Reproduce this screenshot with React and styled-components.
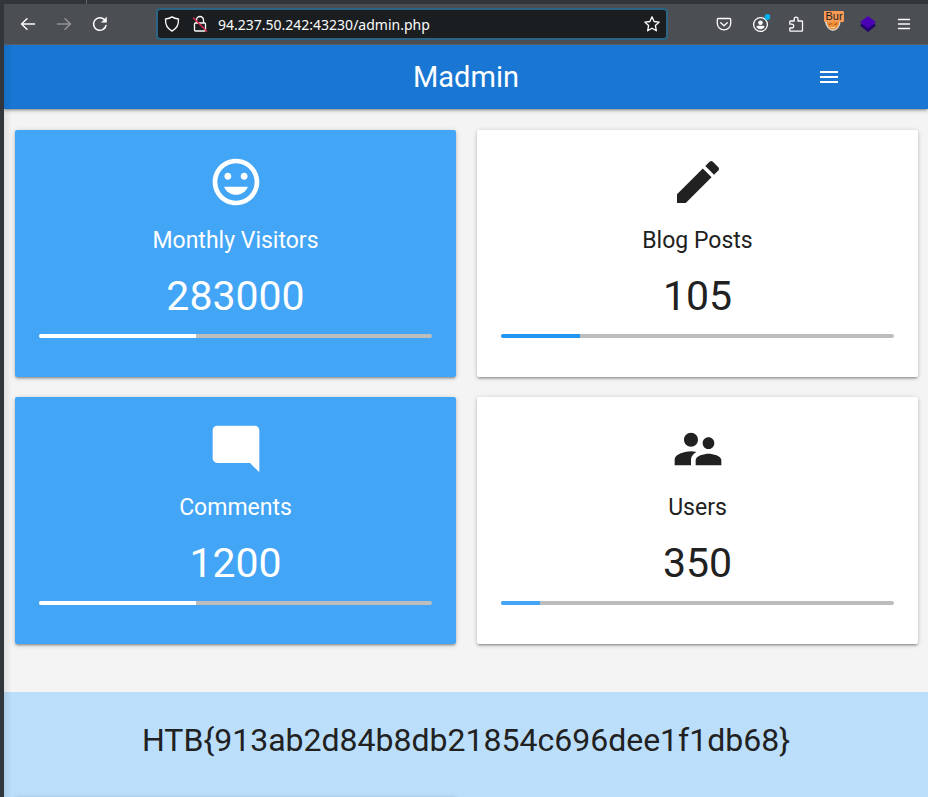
import React from "react";
import styled, { createGlobalStyle } from "styled-components";

const GlobalStyle = createGlobalStyle`
  *, *::before, *::after { box-sizing: border-box; }
  body { margin: 0; background: #31363b; font-family: Roboto, sans-serif; }
  h1, h2, p { margin: 0; font-weight: 400; }
  button { border: 0; padding: 0; background: none; color: inherit; font: inherit; cursor: pointer; }
`;

const elevation =
  "0 2px 2px 0 rgba(0,0,0,.14), 0 3px 1px -2px rgba(0,0,0,.12), 0 1px 5px 0 rgba(0,0,0,.2)";

const Window = styled.div`
  display: flex;
  flex-direction: column;
  height: 100vh;
  padding-left: 4px;
  overflow: hidden;
`;

const TabStrip = styled.div`
  flex: none;
  width: 83px;
  height: 4px;
  border-right: 1px solid #63676b;
`;

const Toolbar = styled.header`
  flex: none;
  display: flex;
  align-items: center;
  height: 41px;
  padding: 0 6px;
  background: #4b4e53;
  border-bottom: 1px solid #5b5e62;
  color: #fcfcfc;
`;

const ToolButton = styled.button`
  position: relative;
  display: flex;
  align-items: center;
  justify-content: center;
  width: 36px;
  height: 32px;

  &:disabled { color: #919397; cursor: default; }
`;

const AddressBar = styled.div`
  flex: 1;
  display: flex;
  align-items: center;
  gap: 10px;
  height: 32px;
  margin: 0 38px;
  padding: 0 6px;
  background: #1b1e20;
  border: 2px solid #2b6484;
  border-radius: 4px;
`;

const AddressInput = styled.input`
  flex: 1;
  min-width: 0;
  border: 0;
  padding: 0;
  outline: 0;
  background: none;
  color: #fcfcfc;
  font: 14px "Noto Sans", sans-serif;
`;

const BurBadge = styled.span`
  position: absolute;
  top: 3px;
  left: 10px;
  width: 20px;
  height: 11px;
  border-radius: 1px;
  background: #f99a56;
  color: #1b1e20;
  font: 11px/11px "Liberation Sans", sans-serif;
  text-align: center;
`;

const Page = styled.main`
  position: relative;
  flex: 1;
  min-height: 0;
  overflow: hidden;
  background: #f4f4f4;

  &::after {
    content: "";
    position: absolute;
    top: 0;
    bottom: 0;
    left: 0;
    width: 8px;
    background: linear-gradient(to right, rgba(0, 0, 0, 0.08), transparent);
    pointer-events: none;
  }
`;

const NavBar = styled.nav`
  height: 64px;
  background: #1976d2;
  box-shadow: ${elevation};
  color: #fff;
`;

const NavContainer = styled.div`
  display: grid;
  grid-template-columns: 1fr auto 1fr;
  align-items: center;
  width: 85%;
  height: 100%;
  margin: 0 auto;
`;

const Brand = styled.h1`
  grid-column: 2;
  font-size: 29px;
  line-height: 64px;
`;

const MenuButton = styled.button`
  justify-self: end;
  display: flex;
  padding: 0 18px;
`;

const CardGrid = styled.section`
  display: grid;
  grid-template-columns: 1fr 1fr;
  gap: 20px 21px;
  padding: 21px 10px 48px 11px;
`;

const Card = styled.article`
  display: flex;
  flex-direction: column;
  align-items: center;
  padding: 24px 24px 39px;
  border-radius: 2px;
  background: ${(p) => (p.$filled ? "#42a5f5" : "#fff")};
  color: ${(p) => (p.$filled ? "#fff" : "#212121")};
  box-shadow: ${elevation};
`;

const CardTitle = styled.h2`
  margin-top: 18px;
  font-size: 23px;
  line-height: 25px;
`;

const CardValue = styled.p`
  margin: 21px 0 15px;
  font-size: 41px;
  line-height: 45px;
`;

const Track = styled.div`
  width: 100%;
  height: 4px;
  overflow: hidden;
  border-radius: 2px;
  background: #bdbdbd;
`;

const Fill = styled.div`
  height: 100%;
  background: ${(p) => p.$color};
`;

const FlagBand = styled.section`
  background: #bbdefb;
  color: #212121;
  text-align: center;
`;

const FlagText = styled.p`
  padding: 30px 0;
  font-size: 32px;
  line-height: 36px;
`;

const PanelRow = styled.div`
  display: grid;
  grid-template-columns: 1fr 1fr;
  gap: 21px;
  padding: 9px 10px 0 11px;
`;

const Panel = styled(Card)`
  min-height: 120px;
`;

function Line({ size = 16, children, ...rest }) {
  return (
    <svg width={size} height={size} viewBox="0 0 16 16" fill="none" stroke="currentColor"
      strokeWidth="1.3" strokeLinecap="round" strokeLinejoin="round" aria-hidden="true" {...rest}>
      {children}
    </svg>
  );
}

function Material({ d, size = 56 }) {
  return (
    <svg width={size} height={size} viewBox="0 0 24 24" fill="currentColor" aria-hidden="true">
      <path d={d} />
    </svg>
  );
}

const paths = {
  menu: "M3 18h18v-2H3v2zm0-5h18v-2H3v2zm0-7v2h18V6H3z",
  mood: "M11.99 2C6.47 2 2 6.48 2 12s4.47 10 9.99 10C17.52 22 22 17.52 22 12S17.52 2 11.99 2zM12 20c-4.42 0-8-3.58-8-8s3.58-8 8-8 8 3.58 8 8-3.58 8-8 8zm3.500-9c.83 0 1.500-.67 1.500-1.500S16.330 8 15.500 8 14 8.670 14 9.500s.67 1.500 1.500 1.500zm-7 0c.83 0 1.500-.67 1.500-1.500S9.330 8 8.500 8 7 8.670 7 9.500 7.670 11 8.500 11zm3.500 6.500c2.330 0 4.310-1.460 5.110-3.500H6.890c.8 2.040 2.780 3.500 5.110 3.500z",
  edit: "M3 17.250V21h3.750L17.810 9.940l-3.750-3.750L3 17.250zM20.710 7.040c.39-.39.39-1.020 0-1.410l-2.340-2.340c-.39-.39-1.020-.39-1.410 0l-1.830 1.830 3.750 3.750 1.830-1.830z",
  comment: "M22 4c0-1.100-.9-2-2-2H4c-1.100 0-2 .9-2 2v12c0 1.100.9 2 2 2h14l4 4V4z",
  users: "M16.500 12c1.380 0 2.490-1.120 2.490-2.500S17.880 7 16.500 7C15.120 7 14 8.120 14 9.500s1.120 2.500 2.500 2.500zM9 11c1.660 0 2.990-1.340 2.990-3S10.660 5 9 5C7.340 5 6 6.340 6 8s1.340 3 3 3zm7.500 3c-1.830 0-5.500.92-5.500 2.750V19h11v-2.250c0-1.830-3.670-2.750-5.500-2.750zM9 13c-2.330 0-7 1.170-7 3.500V19h7v-2.250c0-.85.33-2.340 2.370-3.470C10.500 13.100 9.660 13 9 13z",
};

const stats = [
  { title: "Monthly Visitors", value: "283000", icon: "mood", filled: true, percent: 40, color: "#fff" },
  { title: "Blog Posts", value: "105", icon: "edit", filled: false, percent: 20, color: "#2196f3" },
  { title: "Comments", value: "1200", icon: "comment", filled: true, percent: 40, color: "#fff" },
  { title: "Users", value: "350", icon: "users", filled: false, percent: 10, color: "#42a5f5" },
];

function StatCard({ stat }) {
  return (
    <Card $filled={stat.filled}>
      <Material d={paths[stat.icon]} />
      <CardTitle>{stat.title}</CardTitle>
      <CardValue>{stat.value}</CardValue>
      <Track role="progressbar" aria-label={stat.title} aria-valuenow={stat.percent}>
        <Fill $color={stat.color} style={{ width: `${stat.percent}%` }} />
      </Track>
    </Card>
  );
}

function BrowserToolbar() {
  return (
    <Toolbar>
      <ToolButton aria-label="Back">
        <Line strokeWidth="1.5"><path d="M1.500 8h13M7 2.800 1.500 8 7 13.200" /></Line>
      </ToolButton>
      <ToolButton aria-label="Forward" disabled>
        <Line strokeWidth="1.5"><path d="M14.500 8h-13M9 2.800 14.500 8 9 13.200" /></Line>
      </ToolButton>
      <ToolButton aria-label="Reload">
        <Line strokeWidth="1.5">
          <path d="M14 9.500A6.300 6.300 0 1 1 12.300 3.500" />
          <path d="M14.500 1.500v4.700H9.800z" fill="currentColor" strokeWidth="0.6" />
        </Line>
      </ToolButton>
      <AddressBar>
        <Line><path d="M8 .9c2 1.400 4.100 1.900 6.500 2.100.3 5.600-1.900 9.700-6.500 12.100C3.400 12.700 1.200 8.600 1.500 3 3.900 2.800 6 2.300 8 .9z" /></Line>
        <Line size={18} viewBox="-1 0 18 18">
          <path d="M5.500 8V5a3.500 3.500 0 0 1 7 0v3M4.500 8h9a1 1 0 0 1 1 1v6a1 1 0 0 1-1 1h-9a1 1 0 0 1-1-1V9a1 1 0 0 1 1-1z" />
          <path d="M2.500 3 15.500 16" stroke="#e22850" strokeWidth="1.4" />
        </Line>
        <AddressInput aria-label="Address" defaultValue="94.237.50.242:43230/admin.php" />
        <Line><path d="m8 .8 2.100 4.700 5.100.6-3.800 3.500 1 5.200L8 12.200l-4.400 2.600 1-5.200L.8 6.100l5.100-.6z" /></Line>
      </AddressBar>
      <ToolButton aria-label="Save to Pocket">
        <Line><path d="M2.300 2.500h11.400q1 0 1 1V7.500a6.700 6.300 0 0 1-13.400 0V3.500q0-1 1-1zM4.700 6.700 8 9.800l3.300-3.100" /></Line>
      </ToolButton>
      <ToolButton aria-label="Account">
        <Line size={20} viewBox="-2 -3 20 20">
          <circle cx="8.500" cy="7.500" r="6.900" />
          <circle cx="8.500" cy="5.700" r="2.300" fill="currentColor" stroke="none" />
          <path d="M4.400 10q.2-1.300 1.600-1.300h5q1.400 0 1.600 1.300-1.300 2.300-4.100 2.300T4.400 10z" fill="currentColor" stroke="none" />
          <circle cx="15.500" cy="0" r="2.900" fill="#00b3f4" stroke="none" />
        </Line>
      </ToolButton>
      <ToolButton aria-label="Extensions">
        <Line><path d="M2.500 15.200h11.300q.7 0 .7-.7V5.700q0-.7-.7-.7H10V3a1.900 1.900 0 0 0-3.800 0v2H2.500q-.7 0-.7.700V8.200h2a1.900 1.900 0 0 1 0 3.800h-2v2.500q0 .7.7.700z" /></Line>
      </ToolButton>
      <ToolButton aria-label="Burp proxy">
        <svg width="18" height="18" viewBox="-1 0 18 18" aria-hidden="true">
          <path d="M1 7h15.500q.2 3-2.200 6T9 16 3.700 13 1 7z" fill="#d7d2cb" />
          <path d="M3 6h12q.5 3.500-1.500 6T9 14.500 4.500 12 3 6z" fill="#f08c2e" />
          <path d="m5 9.500 2.500-.8M10.500 9.500l2.500-.8" stroke="#8a5228" fill="none" />
          <path d="M6.500 12q2.500 1.500 5 0" stroke="#ffe0b5" fill="none" />
        </svg>
        <BurBadge>Bur</BurBadge>
      </ToolButton>
      <ToolButton aria-label="Layers extension">
        <svg width="16" height="16" viewBox="0 0 16 16" aria-hidden="true">
          <path d="M0 9.500 3 7h10l3 2.500L8 16z" fill="#21006e" />
          <path d="M8 0 16 6.200 8 12.400 0 6.200z" fill="#4b00b5" />
        </svg>
      </ToolButton>
      <ToolButton aria-label="Application menu">
        <Line><path d="M2.500 3.500h11M2.500 8h11M2.500 12.500h11" /></Line>
      </ToolButton>
    </Toolbar>
  );
}

export default function App() {
  return (
    <Window>
      <GlobalStyle />
      <TabStrip />
      <BrowserToolbar />
      <Page>
        <NavBar>
          <NavContainer>
            <Brand>Madmin</Brand>
            <MenuButton aria-label="Menu"><Material d={paths.menu} size={24} /></MenuButton>
          </NavContainer>
        </NavBar>
        <CardGrid>
          {stats.map((stat) => <StatCard key={stat.title} stat={stat} />)}
        </CardGrid>
        <FlagBand>
          <FlagText>{"HTB{913ab2d84b8db21854c696dee1f1db68}"}</FlagText>
          <PanelRow><Panel /></PanelRow>
        </FlagBand>
      </Page>
    </Window>
  );
}
